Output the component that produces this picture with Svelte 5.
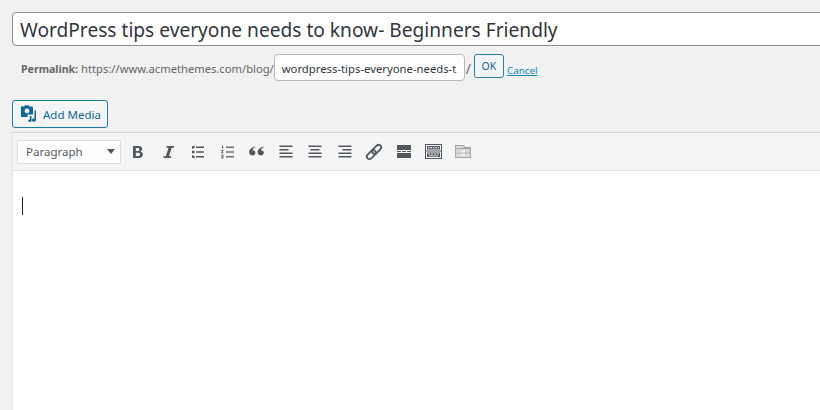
<script>
	let title = 'WordPress tips everyone needs to know- Beginners Friendly';
	let slug = 'wordpress-tips-everyone-needs-t';
</script>

<main>
	<div class="title">{title}</div>

	<div class="permalink">
		<strong>Permalink:</strong>
		<span class="url">https://www.acmethemes.com/blog/</span>
		<div class="slug"><span>{slug}</span></div>
		<span class="slash">/</span>
		<button class="ok">OK</button>
		<a href="#cancel">Cancel</a>
	</div>

	<button class="media">
		<svg width="18" height="18" viewBox="0 0 18 18">
			<path fill="#0e6a94" d="M2 1.500h2l1-1.200h3.500l1 1.200H12c.6 0 1 .4 1 1v6c0 .6-.4 1-1 1H7.500v2.500H2c-.6 0-1-.4-1-1v-9c0-.6.400-1 1-1zm5 2a2.400 2.400 0 1 0 0 4.800 2.400 2.400 0 0 0 0-4.800z" />
			<path fill="#0e6a94" d="M14.500 5.500H16v9.200c0 1.200-1 2-2.200 2s-2-.7-2-1.600.900-1.600 2-1.600c.3 0 .5 0 .7.100zM9 11.500l2.500-.5v4.500c0 .9-.8 1.500-1.700 1.500s-1.600-.6-1.600-1.300.7-1.300 1.600-1.300H10v-2.400z" />
		</svg>
		Add Media
	</button>

	<section class="editor">
		<div class="toolbar">
			<div class="format">
				<span>Paragraph</span>
				<i class="caret"></i>
			</div>

			<div class="tools">
				<!-- bold -->
				<svg viewBox="0 0 20 20"><path fill="#50575e" d="M5 4h5.500c2.300 0 3.700 1.100 3.700 2.900 0 1.200-.7 2.200-1.800 2.600 1.500.4 2.500 1.400 2.500 3 0 2.200-1.600 3.500-4.100 3.500H5zm2.800 2v2.900h2.100c1 0 1.500-.5 1.500-1.500S10.900 6 9.900 6zm0 4.800V14h2.400c1.200 0 1.800-.6 1.800-1.600s-.6-1.600-1.800-1.600z" /></svg>
				<!-- italic -->
				<svg viewBox="0 0 20 20"><path fill="#50575e" d="M8.500 4H16v1.800h-2.300L10.900 14.200H13V16H5.500v-1.800h2.300l2.800-8.400H8.500z" /></svg>
				<!-- bullet list -->
				<svg viewBox="0 0 20 20"><path fill="#50575e" d="M5 4h2.500v2.500H5zm0 4.800h2.500v2.500H5zm0 4.800h2.500v2.500H5zM9 4.500h8V6H9zm0 4.800h8v1.500H9zm0 4.800h8v1.500H9z" /></svg>
				<!-- numbered list -->
				<svg viewBox="0 0 20 20"><path fill="#6b7177" d="M5 3.500h1.200v3.200H5zM4 8h2.500v1L5.200 10.300h1.300v.9H4v-.9l1.400-1.400H4zM4 12.800h2.500v3.700H4v-.9h1.400v-.5H4.600v-.8h.8v-.6H4zM9 4.500h8V6H9zm0 4.800h8v1.500H9zm0 4.800h8v1.500H9z" /></svg>
				<!-- blockquote -->
				<svg viewBox="0 0 20 20"><path fill="#50575e" d="M9.500 5C7 6 6.500 7.300 6.500 8.300c1.600-.1 2.800 1 2.800 2.500 0 1.500-1.200 2.700-2.800 2.700-1.900 0-3.400-1.500-3.400-3.600C3.100 7.700 5.300 5.500 9 4.500zm8.500 0c-2.500 1-3 2.300-3 3.300 1.600-.1 2.800 1 2.800 2.500 0 1.500-1.200 2.700-2.800 2.700-1.900 0-3.400-1.500-3.400-3.600 0-2.200 2.200-4.400 5.900-5.400z" /></svg>
				<!-- align left -->
				<svg viewBox="0 0 20 20"><path fill="#50575e" d="M3.500 3.500h13V5h-13zm0 3.500h9v1.500h-9zm0 3.500h13V12h-13zm0 3.500h13v1.500h-13z" /></svg>
				<!-- align center -->
				<svg viewBox="0 0 20 20"><path fill="#50575e" d="M3.500 3.500h13V5h-13zm2 3.500h9v1.500h-9zm-2 3.500h13V12h-13zm0 3.500h13v1.500h-13z" /></svg>
				<!-- align right -->
				<svg viewBox="0 0 20 20"><path fill="#50575e" d="M3.500 3.500h13V5h-13zm4 3.500h9v1.500h-9zm-4 3.500h13V12h-13zm0 3.500h13v1.500h-13z" /></svg>
				<!-- link -->
				<svg viewBox="0 0 20 20">
					<g fill="none" stroke="#50575e" stroke-width="1.800" transform="rotate(-45 10 10)">
						<rect x="1" y="7.400" width="10.500" height="5.200" rx="2.600" />
						<rect x="8.500" y="7.400" width="10.500" height="5.200" rx="2.600" />
					</g>
				</svg>
				<!-- read more -->
				<svg viewBox="0 0 20 20"><path fill="#50575e" d="M3 3h14v5H3zm0 8h14v5H3zM3 9h4v1H3zm5 0h4v1H8zm5 0h4v1h-4z" /></svg>
				<!-- toolbar toggle -->
				<svg viewBox="0 0 20 20">
					<path fill="#50575e" d="M2 2h17v15H2zm1 1v5.500h15V3zm0 6.500V16h15V9.500z" />
					<path fill="#50575e" d="M4 4h13v3.500H4zM4 10.500h13V15H4z" />
					<path fill="#f5f5f5" d="M5 5h1.500v1.200H5zm2.500 0H9v1.200H7.500zM10 5h1.500v1.200H10zm2.500 0H14v1.200h-1.500zM15 5h1v1.200h-1zM5 11.500h2v1H5zm3 0h2v1H8zm3 0h2v1h-2zm3 0h2v1h-2zM6 13.500h9v.8H6z" />
				</svg>
				<!-- paste -->
				<svg viewBox="0 0 20 20">
					<path fill="#a6a6a6" d="M2 3h9l1 2h6v11H2z" />
					<path fill="#d9d9d9" d="M3 4h7.500l.5 2H3zM3 7h14v8H3z" />
					<path fill="#f0f0f0" d="M8 8h4v6H8z" />
					<path fill="#b5b5b5" d="M3 10.500h14v1H3z" />
				</svg>
			</div>
		</div>

		<div class="content"><i class="cursor"></i></div>
	</section>
</main>

<style>
	:global(body) {
		background: #f1f1f1;
		overflow: hidden;
	}

	main {
		height: 410px;
		width: 860px;
		padding: 12px 0 0 12px;
		box-sizing: border-box;
		display: flex;
		flex-direction: column;
		font-family: 'Noto Sans', sans-serif;
		overflow: hidden;
	}

	.title {
		height: 34px;
		box-sizing: border-box;
		padding-left: 7px;
		background: #fff;
		border: 1px solid #8c8f94;
		border-radius: 4px;
		font-size: 19.150px;
		line-height: 34px;
		color: #32373c;
		white-space: nowrap;
	}

	.permalink {
		display: flex;
		align-items: center;
		height: 27px;
		margin-top: 8px;
		padding-left: 9px;
		font-size: 11.200px;
		color: #666;
	}

	.permalink strong {
		margin: 2px 3px 0 0;
		font-size: 10.600px;
		font-weight: 700;
	}

	.url {
		margin-top: 2px;
	}

	.slug {
		width: 191px;
		height: 27px;
		box-sizing: border-box;
		padding-left: 7px;
		background: #fff;
		border: 1px solid #b4b9be;
		border-radius: 4px;
		font-size: 11.300px;
		line-height: 28px;
		color: #32373c;
		overflow: hidden;
		white-space: nowrap;
	}

	.slash {
		margin: 2px 3px 0 1px;
		font-size: 14px;
	}

	.ok {
		width: 30px;
		height: 24px;
		padding: 0;
		margin-top: -3px;
		background: #f3f5f6;
		border: 1px solid #2b7ea8;
		border-radius: 3px;
		font: 10.500px 'Noto Sans', sans-serif;
		color: #0e6a94;
	}

	a {
		margin: 5px 0 0 3px;
		font-size: 9.800px;
		color: #0e8ab8;
	}

	.media {
		display: flex;
		align-items: center;
		gap: 5px;
		width: 96px;
		height: 28px;
		margin-top: 19px;
		padding: 0 0 0 7px;
		background: #f3f5f6;
		border: 1px solid #1b7ba6;
		border-radius: 3px;
		font: 11.500px 'Noto Sans', sans-serif;
		color: #0e6a94;
	}

	.editor {
		flex: 1;
		display: flex;
		flex-direction: column;
		margin-top: 4px;
		background: #fff;
		border-top: 1px solid #d5d5dd;
		border-left: 1px solid #e2e4e7;
	}

	.toolbar {
		display: flex;
		align-items: center;
		gap: 7px;
		height: 37px;
		padding-left: 4px;
		background: #f5f5f5;
		border-bottom: 1px solid #e2e4e7;
	}

	.format {
		display: flex;
		align-items: center;
		justify-content: space-between;
		width: 104px;
		height: 24px;
		box-sizing: border-box;
		padding: 0 3px 0 8px;
		background: #fdfdfd;
		border: 1px solid #ddd;
		font-size: 11.500px;
		color: #555d66;
	}

	.caret {
		width: 0;
		height: 0;
		margin-right: 2px;
		border: 4px solid transparent;
		border-top: 5px solid #50575e;
		border-bottom: 0;
	}

	.tools {
		display: flex;
		gap: 9.500px;
		margin-top: 1px;
	}

	.tools svg {
		width: 20px;
		height: 20px;
		flex: none;
	}

	.content {
		flex: 1;
		padding: 26px 0 0 9px;
	}

	.cursor {
		display: block;
		width: 1px;
		height: 18px;
		background: #222;
	}
</style>
